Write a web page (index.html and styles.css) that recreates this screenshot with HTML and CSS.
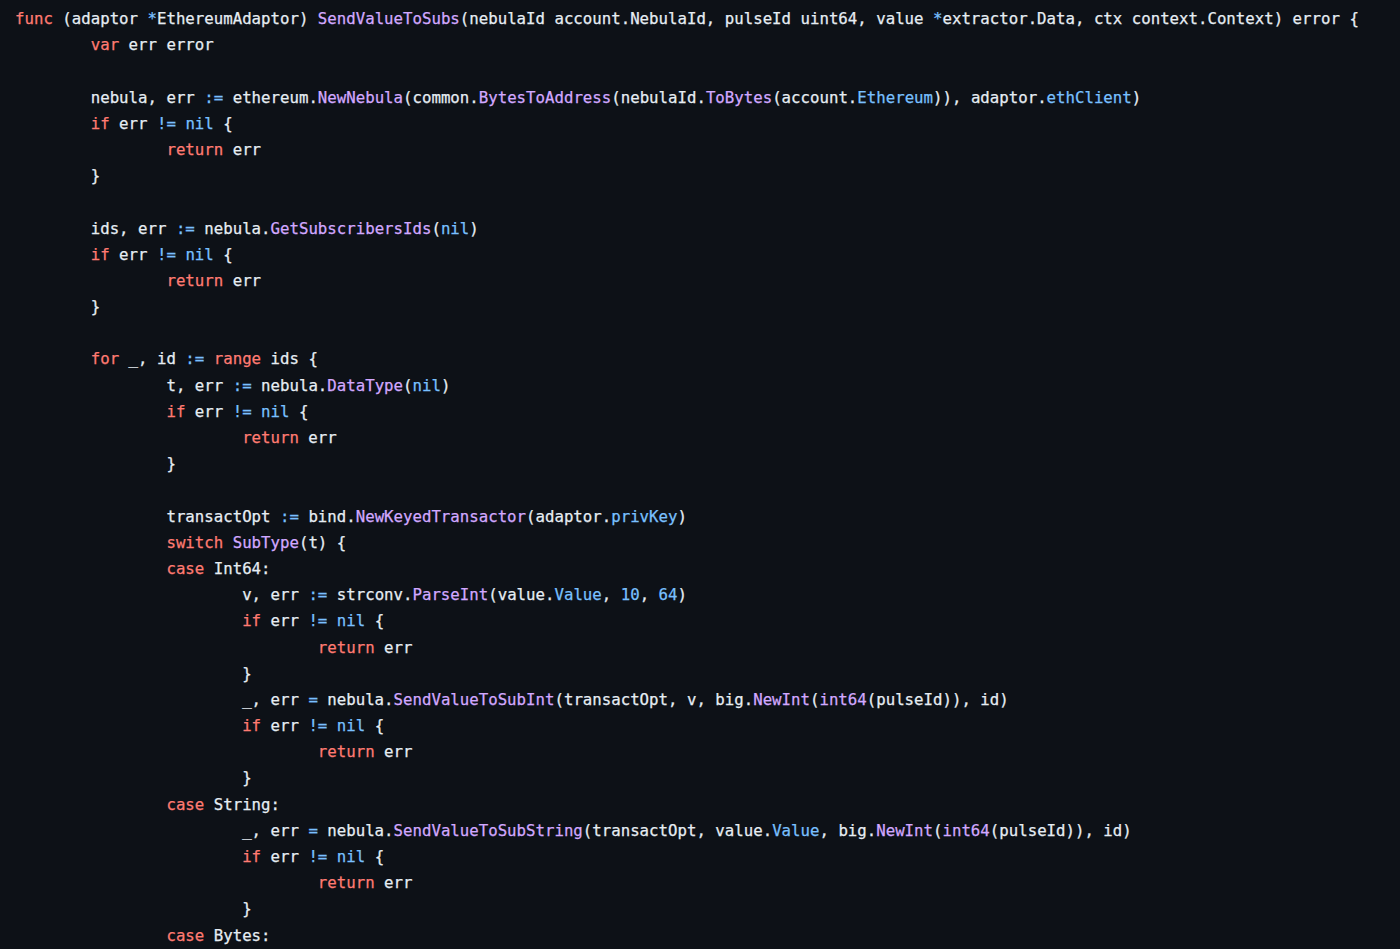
FILE: index.html
```html
<!DOCTYPE html>
<html>
<head>
<meta charset="utf-8">
<link rel="stylesheet" href="styles.css">
</head>
<body>
<pre class="code"><code><div class="ln"><span class="k">func</span> (adaptor <span class="c">*</span>EthereumAdaptor) <span class="f">SendValueToSubs</span>(nebulaId account.NebulaId, pulseId uint64, value <span class="c">*</span>extractor.Data, ctx context.Context) error {</div><div class="ln">	<span class="k">var</span> err error</div><div class="ln"> </div><div class="ln">	nebula, err <span class="c">:=</span> ethereum.<span class="f">NewNebula</span>(common.<span class="f">BytesToAddress</span>(nebulaId.<span class="f">ToBytes</span>(account.<span class="c">Ethereum</span>)), adaptor.<span class="c">ethClient</span>)</div><div class="ln">	<span class="k">if</span> err <span class="c">!=</span> <span class="c">nil</span> {</div><div class="ln">		<span class="k">return</span> err</div><div class="ln">	}</div><div class="ln"> </div><div class="ln">	ids, err <span class="c">:=</span> nebula.<span class="f">GetSubscribersIds</span>(<span class="c">nil</span>)</div><div class="ln">	<span class="k">if</span> err <span class="c">!=</span> <span class="c">nil</span> {</div><div class="ln">		<span class="k">return</span> err</div><div class="ln">	}</div><div class="ln"> </div><div class="ln">	<span class="k">for</span> _, id <span class="c">:=</span> <span class="k">range</span> ids {</div><div class="ln">		t, err <span class="c">:=</span> nebula.<span class="f">DataType</span>(<span class="c">nil</span>)</div><div class="ln">		<span class="k">if</span> err <span class="c">!=</span> <span class="c">nil</span> {</div><div class="ln">			<span class="k">return</span> err</div><div class="ln">		}</div><div class="ln"> </div><div class="ln">		transactOpt <span class="c">:=</span> bind.<span class="f">NewKeyedTransactor</span>(adaptor.<span class="c">privKey</span>)</div><div class="ln">		<span class="k">switch</span> <span class="f">SubType</span>(t) {</div><div class="ln">		<span class="k">case</span> Int64:</div><div class="ln">			v, err <span class="c">:=</span> strconv.<span class="f">ParseInt</span>(value.<span class="c">Value</span>, <span class="c">10</span>, <span class="c">64</span>)</div><div class="ln">			<span class="k">if</span> err <span class="c">!=</span> <span class="c">nil</span> {</div><div class="ln">				<span class="k">return</span> err</div><div class="ln">			}</div><div class="ln">			_, err <span class="c">=</span> nebula.<span class="f">SendValueToSubInt</span>(transactOpt, v, big.<span class="f">NewInt</span>(<span class="f">int64</span>(pulseId)), id)</div><div class="ln">			<span class="k">if</span> err <span class="c">!=</span> <span class="c">nil</span> {</div><div class="ln">				<span class="k">return</span> err</div><div class="ln">			}</div><div class="ln">		<span class="k">case</span> String:</div><div class="ln">			_, err <span class="c">=</span> nebula.<span class="f">SendValueToSubString</span>(transactOpt, value.<span class="c">Value</span>, big.<span class="f">NewInt</span>(<span class="f">int64</span>(pulseId)), id)</div><div class="ln">			<span class="k">if</span> err <span class="c">!=</span> <span class="c">nil</span> {</div><div class="ln">				<span class="k">return</span> err</div><div class="ln">			}</div><div class="ln">		<span class="k">case</span> Bytes:</div></code></pre>
</body>
</html>
```
FILE: styles.css
```css
html, body {
  margin: 0;
  padding: 0;
  background: #0d1117;
  height: 100%;
  overflow: hidden;
}
.code {
  margin: 0;
  padding: 6px 0 0 15px;
  font-family: "DejaVu Sans Mono", "Liberation Mono", monospace;
  font-size: 15.72px;
  line-height: 26.2px;
  color: #e6edf3;
  tab-size: 8;
  -moz-tab-size: 8;
  white-space: pre;
  -webkit-text-stroke: 0.25px currentColor;
}
.code code {
  font-family: inherit;
}
.ln {
  height: 26.2px;
  white-space: pre;
}
.k { color: #ff7b72; }
.f { color: #d2a8ff; }
.c { color: #79c0ff; }
```
